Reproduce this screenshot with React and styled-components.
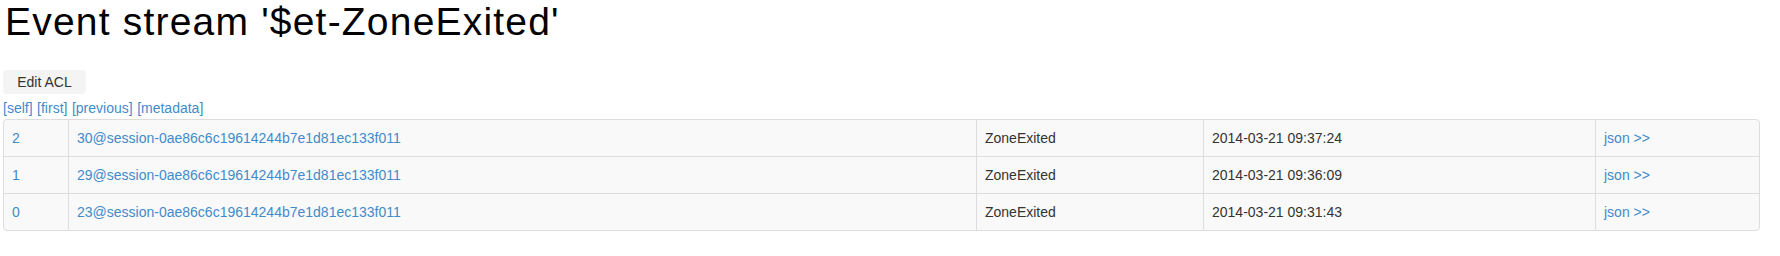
import React from "react";
import styled, { createGlobalStyle } from "styled-components";

const Global = createGlobalStyle`
  html, body { margin: 0; padding: 0; background: #fff; }
  body {
    font-family: "Liberation Sans", Arial, sans-serif;
    font-size: 14px;
    line-height: 20px;
    color: #333;
  }
`;

const Page = styled.div`
  width: 1757px;
  padding: 0 0 0 3px;
  display: flex;
  flex-direction: column;
  align-items: flex-start;
`;

const Title = styled.h1`
  margin: 0 0 0 2px;
  font-family: "Liberation Sans", Arial, sans-serif;
  font-weight: 400;
  font-size: 39px;
  letter-spacing: 1.2px;
  line-height: 44px;
  color: #000;
`;

const Toolbar = styled.div`
  margin-top: 26px;
  display: flex;
`;

const Button = styled.button`
  font-family: "Liberation Sans", Arial, sans-serif;
  font-size: 14px;
  line-height: 20px;
  color: #333;
  background: #f4f4f4;
  border: 0;
  border-radius: 4px;
  padding: 2px 14px;
  width: 83px;
  height: 24px;
  cursor: pointer;
`;

const LinkBar = styled.nav`
  margin-top: 4px;
  display: flex;
  gap: 4.5px;
  line-height: 20px;
`;

const Link = styled.a`
  color: #428bca;
  text-decoration: none;
`;

const Table = styled.table`
  margin-top: 1px;
  width: 1757px;
  table-layout: fixed;
  border-collapse: separate;
  border-spacing: 0;
  border: 1px solid #ddd;
  border-radius: 4px;
  background: #f9f9f9;
`;

const Cell = styled.td`
  padding: 8px;
  line-height: 20px;
  border-top: ${(p) => (p.$first ? "0" : "1px solid #ddd")};
  border-left: ${(p) => (p.$lead ? "0" : "1px solid #ddd")};
  color: #333;
  white-space: nowrap;
  overflow: hidden;
`;

const rows = [
  { n: "2", id: "30@session-0ae86c6c19614244b7e1d81ec133f011", type: "ZoneExited", date: "2014-03-21 09:37:24" },
  { n: "1", id: "29@session-0ae86c6c19614244b7e1d81ec133f011", type: "ZoneExited", date: "2014-03-21 09:36:09" },
  { n: "0", id: "23@session-0ae86c6c19614244b7e1d81ec133f011", type: "ZoneExited", date: "2014-03-21 09:31:43" },
];

export default function App() {
  return (
    <>
      <Global />
      <Page>
        <Title>Event stream '$et-ZoneExited'</Title>
        <Toolbar>
          <Button>Edit ACL</Button>
        </Toolbar>
        <LinkBar>
          <Link href="#">[self]</Link>
          <Link href="#">[first]</Link>
          <Link href="#">[previous]</Link>
          <Link href="#">[metadata]</Link>
        </LinkBar>
        <Table>
          <colgroup>
            <col style={{ width: 64 }} />
            <col style={{ width: 908 }} />
            <col style={{ width: 227 }} />
            <col style={{ width: 392 }} />
            <col />
          </colgroup>
          <tbody>
            {rows.map((r, i) => (
              <tr key={r.n}>
                <Cell $first={i === 0} $lead>
                  <Link href="#">{r.n}</Link>
                </Cell>
                <Cell $first={i === 0}>
                  <Link href="#">{r.id}</Link>
                </Cell>
                <Cell $first={i === 0}>{r.type}</Cell>
                <Cell $first={i === 0}>{r.date}</Cell>
                <Cell $first={i === 0}>
                  <Link href="#">json &gt;&gt;</Link>
                </Cell>
              </tr>
            ))}
          </tbody>
        </Table>
      </Page>
    </>
  );
}
